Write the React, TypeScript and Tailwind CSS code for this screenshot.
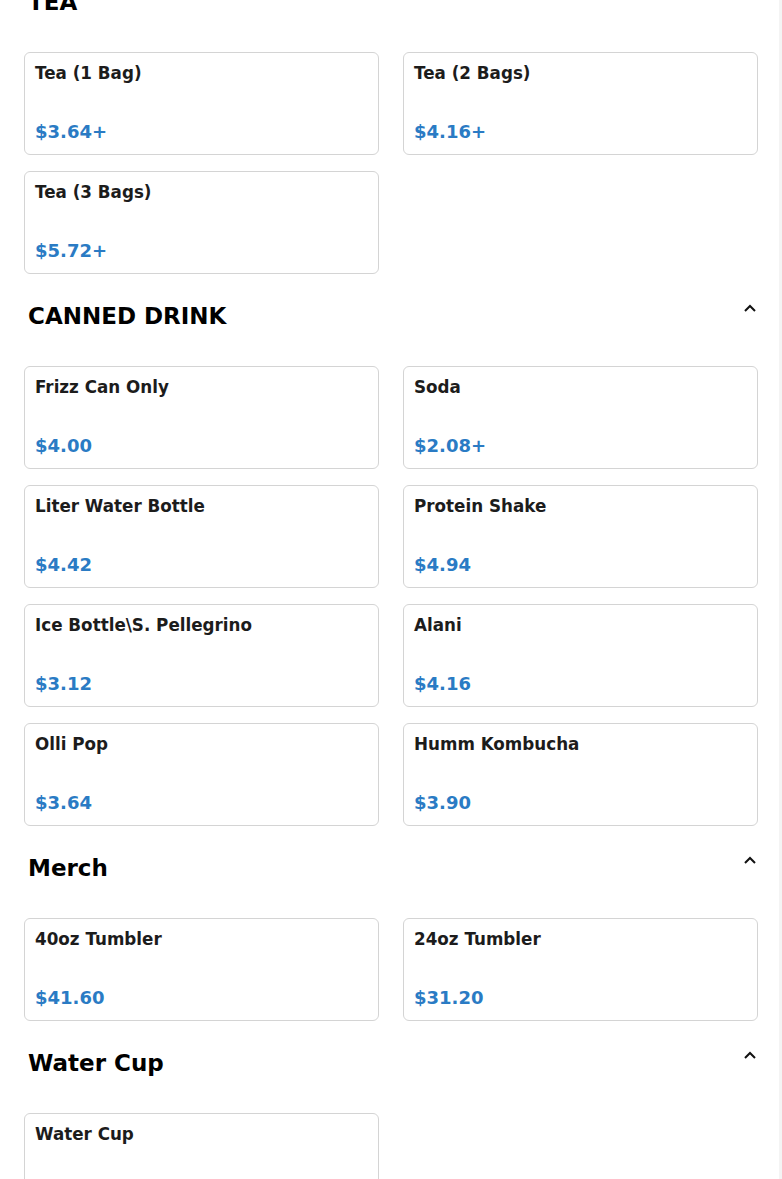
const sections = [
  {
    title: "TEA",
    items: [
      { name: "Tea (1 Bag)", price: "$3.64+" },
      { name: "Tea (2 Bags)", price: "$4.16+" },
      { name: "Tea (3 Bags)", price: "$5.72+" },
    ],
  },
  {
    title: "CANNED DRINK",
    items: [
      { name: "Frizz Can Only", price: "$4.00" },
      { name: "Soda", price: "$2.08+" },
      { name: "Liter Water Bottle", price: "$4.42" },
      { name: "Protein Shake", price: "$4.94" },
      { name: "Ice Bottle\\S. Pellegrino", price: "$3.12" },
      { name: "Alani", price: "$4.16" },
      { name: "Olli Pop", price: "$3.64" },
      { name: "Humm Kombucha", price: "$3.90" },
    ],
  },
  {
    title: "Merch",
    items: [
      { name: "40oz Tumbler", price: "$41.60" },
      { name: "24oz Tumbler", price: "$31.20" },
    ],
  },
  {
    title: "Water Cup",
    items: [{ name: "Water Cup", price: "$1.04" }],
  },
]

function Chevron() {
  return (
    <svg width="12" height="8" viewBox="0 0 12 8" className="mt-[4px] mr-[2px] shrink-0">
      <polyline points="1,7 6,2 11,7" fill="none" stroke="#111" strokeWidth="2" />
    </svg>
  )
}

export default function App() {
  return (
    <div
      className="h-[1179px] overflow-hidden bg-white border-r-[3px] border-[#f4f4f4] pl-6 pr-[21px]"
      style={{ fontFamily: '"DejaVu Sans", sans-serif' }}
    >
      <div className="-mt-[40px]">
        {sections.map((section) => (
          <section key={section.title} className="pt-[26px]">
            <div className="flex justify-between items-start h-8 mb-[34px] pl-1">
              <h2 className="text-[23px] leading-8 font-bold text-black">{section.title}</h2>
              <Chevron />
            </div>
            <div className="grid grid-cols-2 gap-x-6 gap-y-4">
              {section.items.map((item) => (
                <div
                  key={item.name}
                  className="h-[103px] flex flex-col justify-between border border-[#d4d4d4] rounded-md bg-white px-[10px] pt-[10px] pb-[10px]"
                >
                  <p className="text-[16.75px] leading-5 font-bold text-[#1c1c1c]">{item.name}</p>
                  <p className="text-lg leading-6 font-bold text-[#2a7bc4]">{item.price}</p>
                </div>
              ))}
            </div>
          </section>
        ))}
      </div>
    </div>
  )
}
